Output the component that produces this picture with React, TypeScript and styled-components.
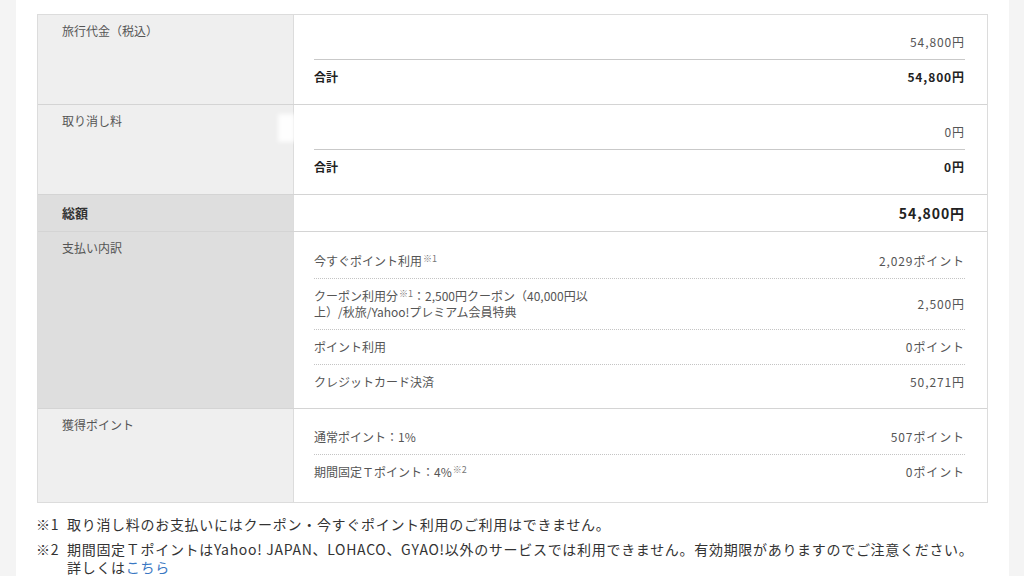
import React from "react";
import styled, { createGlobalStyle } from "styled-components";

const GlobalStyle = createGlobalStyle`
  html, body {
    margin: 0;
    padding: 0;
    background: #ffffff;
  }
  body {
    font-family: "Noto Sans CJK JP", "Noto Sans", sans-serif;
    color: #555;
  }
`;

const Page = styled.div`
  display: grid;
  grid-template-columns: 16px 1fr 15px;
  width: 1024px;
  height: 576px;
  overflow: hidden;
`;

const SideStrip = styled.div`
  background: #f4f4f4;
`;

const Main = styled.main`
  padding: 14px 21px 0 21px;
`;

const Table = styled.div`
  border: 1px solid #dcdcdc;
  display: flex;
  flex-direction: column;
`;

const Row = styled.div`
  position: relative;
  display: flex;
  & + & {
    border-top: 1px solid #d4d4d4;
  }
`;

const Label = styled.div<{ $dark?: boolean; $strong?: boolean }>`
  flex: 0 0 256px;
  box-sizing: border-box;
  padding: ${(p) => (p.$strong ? "9px 24px" : "8px 24px")};
  background: ${(p) => (p.$dark ? "#dedede" : "#efefef")};
  border-right: 1px solid #dcdcdc;
  font-size: ${(p) => (p.$strong ? "13px" : "12px")};
  font-weight: ${(p) => (p.$strong ? 700 : 400)};
  color: ${(p) => (p.$strong ? "#333" : "#555")};
  line-height: ${(p) => (p.$strong ? "18px" : "16px")};
`;

const Cell = styled.div<{ $top: number; $bottom: number }>`
  flex: 1;
  padding: ${(p) => `${p.$top}px 22px ${p.$bottom}px 20px`};
  display: flex;
  flex-direction: column;
`;

const Line = styled.div<{ $rule?: "solid" | "dotted" }>`
  display: flex;
  justify-content: space-between;
  align-items: center;
  padding: 9px 0;
  font-size: 12px;
  line-height: 16px;
  border-top: ${(p) =>
    p.$rule === "solid"
      ? "1px solid #c9c9c9"
      : p.$rule === "dotted"
      ? "1px dotted #c4c4c4"
      : "none"};
`;

const ItemName = styled.div<{ $bold?: boolean }>`
  width: 300px;
  color: ${(p) => (p.$bold ? "#222" : "#555")};
  font-weight: ${(p) => (p.$bold ? 700 : 400)};
`;

const Amount = styled.div<{ $bold?: boolean }>`
  text-align: right;
  letter-spacing: 0.9px;
  color: ${(p) => (p.$bold ? "#222" : "#555")};
  font-weight: ${(p) => (p.$bold ? 700 : 400)};
`;

const GrandTotal = styled.div`
  flex: 1;
  padding: 9px 22px 9px 20px;
  text-align: right;
  font-size: 14px;
  line-height: 18px;
  font-weight: 700;
  letter-spacing: 0.9px;
  color: #222;
`;

const Note = styled.span`
  font-size: 9px;
  line-height: 1;
  vertical-align: 4px;
  color: #777;
  margin-left: 1px;
`;

const Glare = styled.div`
  position: absolute;
  left: 240px;
  top: 9px;
  width: 17px;
  height: 28px;
  background: rgba(255, 255, 255, 0.9);
  filter: blur(2px);
`;

const Footnotes = styled.ul`
  list-style: none;
  margin: 12px 0 0 -1px;
  padding: 0;
  display: flex;
  flex-direction: column;
  gap: 7px;
`;

const Footnote = styled.li`
  display: grid;
  grid-template-columns: 31px 1fr;
  font-size: 14px;
  line-height: 18px;
  letter-spacing: 0.7px;
  color: #333;
`;

const Marker = styled.span`
  white-space: nowrap;
`;

const TextLink = styled.a`
  color: #3a78c3;
  text-decoration: none;
`;

type Item = { name: React.ReactNode; amount: string; bold?: boolean };

function Lines({
  items,
  rule,
  top = 10,
  bottom = 10,
}: {
  items: Item[];
  rule: "solid" | "dotted";
  top?: number;
  bottom?: number;
}) {
  return (
    <Cell $top={top} $bottom={bottom}>
      {items.map((it, i) => (
        <Line key={i} $rule={i === 0 ? undefined : rule}>
          <ItemName $bold={it.bold}>{it.name}</ItemName>
          <Amount $bold={it.bold}>{it.amount}</Amount>
        </Line>
      ))}
    </Cell>
  );
}

export default function App() {
  return (
    <>
      <GlobalStyle />
      <Page>
        <SideStrip />
        <Main>
          <Table>
            <Row>
              <Label>旅行代金（税込）</Label>
              <Lines
                rule="solid"
                items={[
                  { name: "", amount: "54,800円" },
                  { name: "合計", amount: "54,800円", bold: true },
                ]}
              />
            </Row>
            <Row>
              <Label>取り消し料</Label>
              <Lines
                rule="solid"
                items={[
                  { name: "", amount: "0円" },
                  { name: "合計", amount: "0円", bold: true },
                ]}
              />
              <Glare />
            </Row>
            <Row>
              <Label $dark $strong>
                総額
              </Label>
              <GrandTotal>54,800円</GrandTotal>
            </Row>
            <Row>
              <Label $dark>支払い内訳</Label>
              <Lines
                rule="dotted"
                top={12}
                bottom={9}
                items={[
                  {
                    name: (
                      <>
                        今すぐポイント利用<Note>※1</Note>
                      </>
                    ),
                    amount: "2,029ポイント",
                  },
                  {
                    name: (
                      <>
                        クーポン利用分<Note>※1</Note>：2,500円クーポン（40,000円以上）/秋旅/Yahoo!プレミアム会員特典
                      </>
                    ),
                    amount: "2,500円",
                  },
                  { name: "ポイント利用", amount: "0ポイント" },
                  { name: "クレジットカード決済", amount: "50,271円" },
                ]}
              />
            </Row>
            <Row>
              <Label>獲得ポイント</Label>
              <Lines
                rule="dotted"
                top={11}
                bottom={13}
                items={[
                  { name: "通常ポイント：1%", amount: "507ポイント" },
                  {
                    name: (
                      <>
                        期間固定Ｔポイント：4%<Note>※2</Note>
                      </>
                    ),
                    amount: "0ポイント",
                  },
                ]}
              />
            </Row>
          </Table>
          <Footnotes>
            <Footnote>
              <Marker>※1</Marker>
              <span>取り消し料のお支払いにはクーポン・今すぐポイント利用のご利用はできません。</span>
            </Footnote>
            <Footnote>
              <Marker>※2</Marker>
              <span>
                期間固定ＴポイントはYahoo! JAPAN、LOHACO、GYAO!以外のサービスでは利用できません。有効期限がありますのでご注意ください。
                <br />
                詳しくは<TextLink href="#">こちら</TextLink>
              </span>
            </Footnote>
          </Footnotes>
        </Main>
        <SideStrip />
      </Page>
    </>
  );
}
